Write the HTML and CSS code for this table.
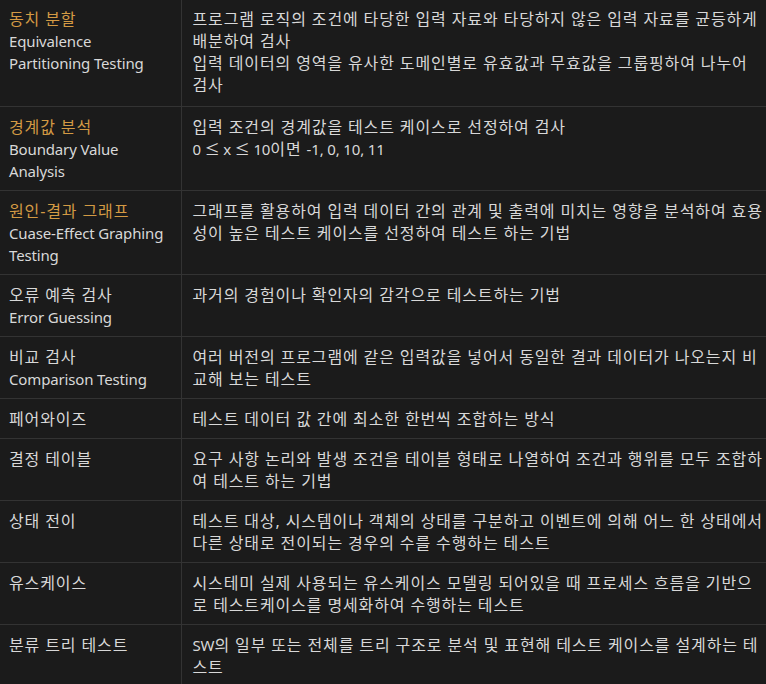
FILE: index.html
```html
<!DOCTYPE html>
<html lang="ko">
<head>
<meta charset="utf-8">
<link rel="stylesheet" href="styles.css">
</head>
<body>
<table class="tbl">
  <colgroup><col class="c1"><col class="c2"></colgroup>
  <tr>
    <td class="name"><span class="hl">동치 분할</span><br><span class="en">Equivalence<br>Partitioning Testing</span></td>
    <td class="desc">프로그램 로직의 조건에 타당한 입력 자료와 타당하지 않은 입력 자료를 균등하게 배분하여 검사<br>입력 데이터의 영역을 유사한 도메인별로 유효값과 무효값을 그룹핑하여 나누어 검사</td>
  </tr>
  <tr>
    <td class="name"><span class="hl">경계값 분석</span><br><span class="en">Boundary Value<br>Analysis</span></td>
    <td class="desc">입력 조건의 경계값을 테스트 케이스로 선정하여 검사<br><span class="en">0 ≤ x ≤ 10</span>이면 <span class="en">-1, 0, 10, 11</span></td>
  </tr>
  <tr>
    <td class="name"><span class="hl">원인-결과 그래프</span><br><span class="en">Cuase-Effect Graphing<br>Testing</span></td>
    <td class="desc">그래프를 활용하여 입력 데이터 간의 관계 및 출력에 미치는 영향을 분석하여 효용성이 높은 테스트 케이스를 선정하여 테스트 하는 기법</td>
  </tr>
  <tr>
    <td class="name">오류 예측 검사<br><span class="en">Error Guessing</span></td>
    <td class="desc">과거의 경험이나 확인자의 감각으로 테스트하는 기법</td>
  </tr>
  <tr>
    <td class="name">비교 검사<br><span class="en">Comparison Testing</span></td>
    <td class="desc">여러 버전의 프로그램에 같은 입력값을 넣어서 동일한 결과 데이터가 나오는지 비교해 보는 테스트</td>
  </tr>
  <tr>
    <td class="name">페어와이즈</td>
    <td class="desc">테스트 데이터 값 간에 최소한 한번씩 조합하는 방식</td>
  </tr>
  <tr>
    <td class="name">결정 테이블</td>
    <td class="desc">요구 사항 논리와 발생 조건을 테이블 형태로 나열하여 조건과 행위를 모두 조합하여 테스트 하는 기법</td>
  </tr>
  <tr>
    <td class="name">상태 전이</td>
    <td class="desc">테스트 대상, 시스템이나 객체의 상태를 구분하고 이벤트에 의해 어느 한 상태에서 다른 상태로 전이되는 경우의 수를 수행하는 테스트</td>
  </tr>
  <tr>
    <td class="name">유스케이스</td>
    <td class="desc">시스테미 실제 사용되는 유스케이스 모델링 되어있을 때 프로세스 흐름을 기반으로 테스트케이스를 명세화하여 수행하는 테스트</td>
  </tr>
  <tr>
    <td class="name">분류 트리 테스트</td>
    <td class="desc"><span class="en">SW</span>의 일부 또는 전체를 트리 구조로 분석 및 표현해 테스트 케이스를 설계하는 테스트</td>
  </tr>
</table>
</body>
</html>
```

FILE: styles.css
```css
html, body {
  margin: 0;
  padding: 0;
  background: #1b1b1b;
}
body {
  width: 766px;
  height: 684px;
  overflow: hidden;
  font-family: "Noto Sans", "Noto Sans CJK KR", sans-serif;
  font-size: 16px;
  letter-spacing: 0.88px;
  line-height: 22px;
  color: #d8d8d8;
}
.tbl {
  border-collapse: collapse;
  width: 766px;
  table-layout: fixed;
}
.c1 { width: 181px; }
.tbl td {
  vertical-align: top;
  border-top: 1px solid #333333;
  padding: 9px 2px 8px 11px;
  word-break: break-all;
}
.tbl tr:first-child td {
  border-top: none;
  padding-top: 8px;
  padding-bottom: 10px;
}
.tbl td.name {
  padding-left: 9px;
  border-right: 1px solid #333333;
}
.hl {
  color: #d39a44;
}
.en {
  font-size: 15px;
  letter-spacing: -0.15px;
}
```
